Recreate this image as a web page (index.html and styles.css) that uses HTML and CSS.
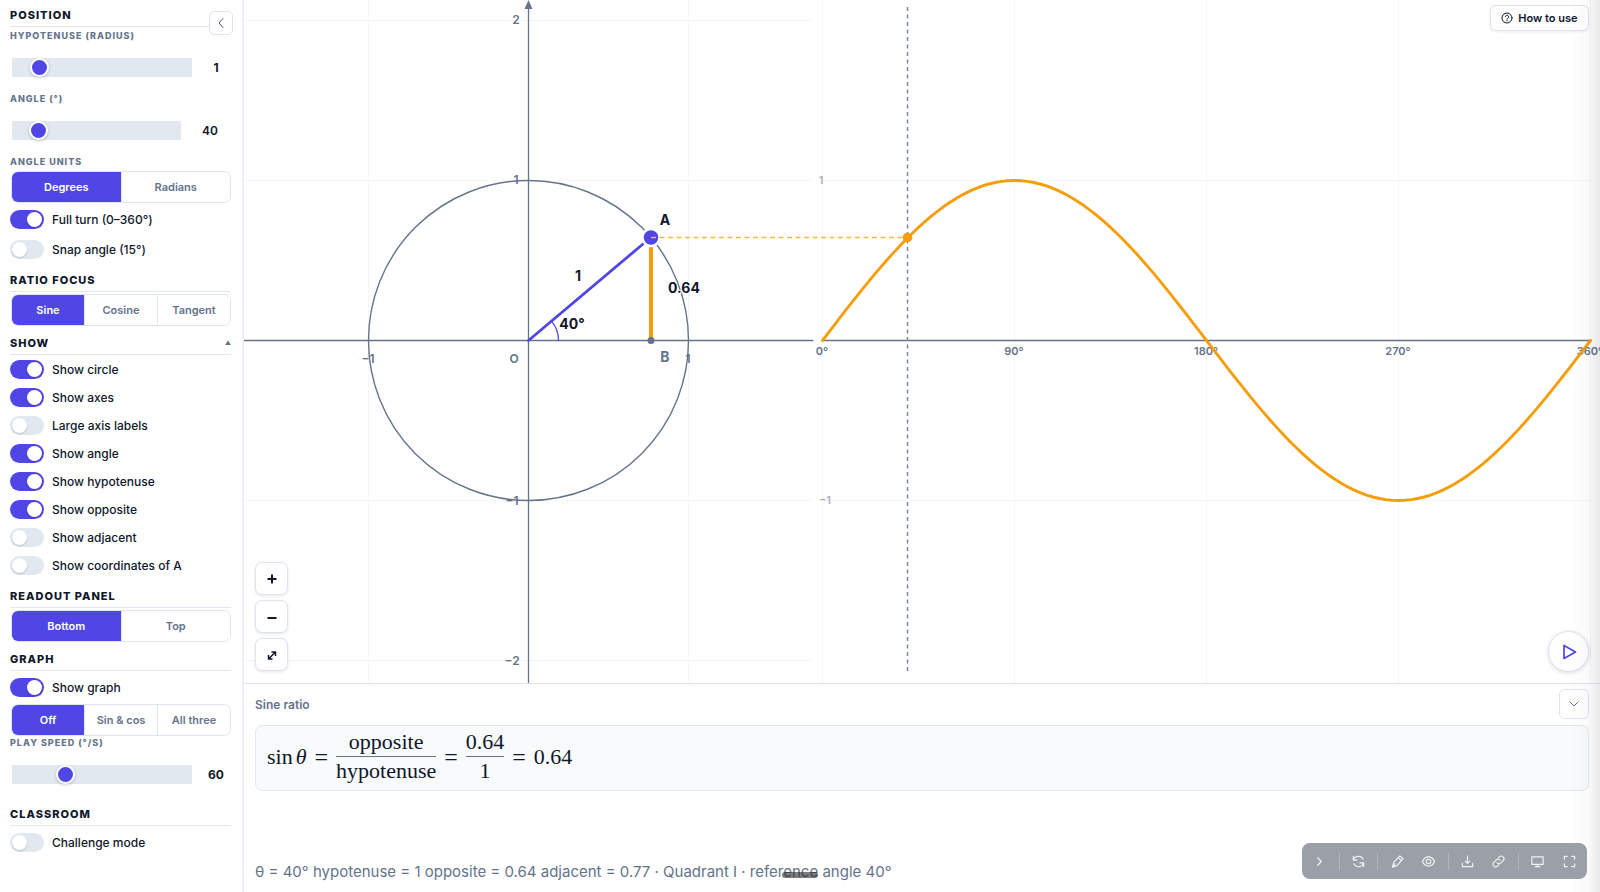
FILE: index.html
```html
<!DOCTYPE html>
<html lang="en">
<head>
<meta charset="utf-8">
<title>Unit circle and trigonometric ratios</title>
<link rel="stylesheet" href="styles.css">
</head>
<body>
<div class="app">
  <aside class="sidebar">
    <button class="collapse" aria-label="Collapse panel"><svg width="14" height="14" viewBox="0 0 14 14"><path d="M9 2.500 5 7 9 11.500"/></svg></button>
    <h2 class="heading">Position</h2>
    <label class="field" for="hyp">Hypotenuse (radius)</label>
    <div class="slider-row"><input id="hyp" class="slider" type="range" min="0.5" max="5" step="0.1" value="1"><output class="value" for="hyp">1</output></div>
    <label class="field" for="angle">Angle (°)</label>
    <div class="slider-row"><input id="angle" class="slider" type="range" min="0" max="360" value="40"><input class="number" type="text" value="40" aria-label="Angle value"></div>
    <div class="field">Angle units</div>
    <div class="segmented"><button class="active">Degrees</button><button>Radians</button></div>
    <label class="toggle roomy"><input type="checkbox" checked>Full turn (0–360°)</label>
    <label class="toggle roomy"><input type="checkbox">Snap angle (15°)</label>

    <h2 class="heading">Ratio focus</h2>
    <div class="segmented"><button class="active">Sine</button><button>Cosine</button><button>Tangent</button></div>

    <h2 class="heading">Show<span class="caret">▲</span></h2>
    <label class="toggle"><input type="checkbox" checked>Show circle</label>
    <label class="toggle"><input type="checkbox" checked>Show axes</label>
    <label class="toggle"><input type="checkbox">Large axis labels</label>
    <label class="toggle"><input type="checkbox" checked>Show angle</label>
    <label class="toggle"><input type="checkbox" checked>Show hypotenuse</label>
    <label class="toggle"><input type="checkbox" checked>Show opposite</label>
    <label class="toggle"><input type="checkbox">Show adjacent</label>
    <label class="toggle"><input type="checkbox">Show coordinates of A</label>

    <h2 class="heading">Readout panel</h2>
    <div class="segmented"><button class="active">Bottom</button><button>Top</button></div>

    <h2 class="heading">Graph</h2>
    <label class="toggle roomy"><input type="checkbox" checked>Show graph</label>
    <div class="segmented"><button class="active">Off</button><button>Sin &amp; cos</button><button>All three</button></div>
    <label class="field" for="speed">Play speed (°/s)</label>
    <div class="slider-row"><input id="speed" class="slider" type="range" min="15" max="180" value="60"><output class="value" for="speed">60</output></div>

    <h2 class="heading">Classroom</h2>
    <label class="toggle roomy"><input type="checkbox">Challenge mode</label>
  </aside>

  <main class="main">
    <section class="stage">
      <svg class="canvas" viewBox="0 0 1356 683" preserveAspectRatio="xMidYMid meet">
        <g class="grid">
          <path d="M0 20.500H569M0 180.500H569M0 500.500H569M0 660.500H569M124.500 0V683M444.500 0V683"/>
          <path d="M578.500 0V683M770.500 0V683M962.500 0V683M1154.500 0V683M1346.500 0V683M578 180.500H1346M578 500.500H1346"/>
        </g>
        <path class="axis" d="M0 340.500H569M578 340.500H1346M284.500 6V683"/>
        <path class="arrow" d="M284.500 0 288.500 9H280.500Z"/>
        <g class="ticks">
          <text x="272" y="24" text-anchor="middle">2</text>
          <text x="272" y="184" text-anchor="middle">1</text>
          <text x="268" y="505" text-anchor="middle">−1</text>
          <text x="268" y="665" text-anchor="middle">−2</text>
          <text x="124" y="363" text-anchor="middle">−1</text>
          <text x="444" y="363" text-anchor="middle">1</text>
          <text x="270" y="363" text-anchor="middle">O</text>
        </g>
        <circle class="circle" cx="284.500" cy="340.500" r="160"/>
        <path class="arc" d="M314.500 340.500A30 30 0 0 0 307.500 321.200"/>
        <path class="opposite" d="M407 247V340"/>
        <path class="hypotenuse" d="M284.500 340.500 399 244"/>
        <circle class="point-a" cx="407" cy="237.500" r="8.500"/>
        <circle class="point-b" cx="407" cy="340.500" r="3.500"/>
        <g class="labels">
          <text x="421" y="225" text-anchor="middle">A</text>
          <text x="334" y="281" text-anchor="middle">1</text>
          <text x="440" y="293" text-anchor="middle">0.64</text>
          <text x="328" y="329" text-anchor="middle">40°</text>
          <text class="muted" x="421" y="362" text-anchor="middle">B</text>
        </g>
        <g class="wave-ticks">
          <text class="faint" x="577" y="184" text-anchor="middle">1</text>
          <text class="faint" x="581" y="504" text-anchor="middle">−1</text>
          <text x="578" y="355" text-anchor="middle">0°</text>
          <text x="770" y="355" text-anchor="middle">90°</text>
          <text x="962" y="355" text-anchor="middle">180°</text>
          <text x="1154" y="355" text-anchor="middle">270°</text>
          <text x="1346" y="355" text-anchor="middle">360°</text>
        </g>
        <path class="guide" d="M663.500 7V671"/>
        <path class="projection" d="M407 237.500H664"/>
        <path id="wave" class="wave"/>
        <circle class="wave-point" cx="663.500" cy="237.500" r="4.800"/>
      </svg>
      <div class="zoom">
        <button aria-label="Zoom in"><svg width="16" height="16" viewBox="0 0 16 16"><path d="M8 3.500v9M3.500 8h9"/></svg></button>
        <button aria-label="Zoom out"><svg width="16" height="16" viewBox="0 0 16 16"><path d="M3.500 9h9"/></svg></button>
        <button aria-label="Fit view"><svg class="fit" width="16" height="16" viewBox="0 0 16 16"><path d="M5 11.500l6-6M7.500 5h4v4M4.500 8v4h4"/></svg></button>
      </div>
      <button class="help"><svg width="12" height="12" viewBox="0 0 12 12"><circle cx="6" cy="6" r="5"/><path d="M4.400 4.800a1.600 1.600 0 1 1 2.400 1.400c-.6.300-.8.500-.8 1M6 8.500v.5"/></svg>How to use</button>
      <button class="play" aria-label="Play"><svg width="16" height="18" viewBox="0 0 16 18"><path d="M3 2.500v13L14.500 9Z"/></svg></button>
    </section>

    <section class="readout">
      <header class="readout-head"><h3>Sine ratio</h3><button class="fold" aria-label="Hide readout"><svg width="12" height="12" viewBox="0 0 12 12"><path d="M2 4l4 4 4-4"/></svg></button></header>
      <div class="formula">
        <span class="fn">sin</span><i>θ</i><span class="eq">=</span>
        <span class="frac"><span class="num">opposite</span><span>hypotenuse</span></span><span class="eq">=</span>
        <span class="frac"><span class="num">0.64</span><span>1</span></span><span class="eq">=</span><span>0.64</span>
      </div>
      <p class="summary">θ = 40° hypotenuse = 1 opposite = 0.64 adjacent = 0.77 · Quadrant I · reference angle 40°</p>
    </section>
  </main>
</div>
<div class="edge"></div>
<div class="handle"></div>
<nav class="toolbar" aria-label="Page tools">
  <button aria-label="Collapse toolbar"><svg viewBox="0 0 16 16"><path d="M6 4l4 4-4 4"/></svg></button><hr>
  <button aria-label="Reload"><svg viewBox="0 0 16 16"><path d="M2.500 6.500A5.700 5.700 0 0 1 13 5.500M13.500 9.500A5.700 5.700 0 0 1 3 10.500M2.500 2.500v4h4M13.500 13.500v-4h-4"/></svg></button><hr>
  <button aria-label="Draw"><svg viewBox="0 0 16 16"><path d="M2.500 14l1.500-5L10.500 2l3.500 3-6.500 7.500L2.500 14l3-3.500M9 4l3.500 3"/></svg></button>
  <button aria-label="Focus"><svg viewBox="0 0 16 16"><path d="M1.500 8c3-6.500 10-6.500 13 0-3 6.500-10 6.500-13 0Z"/><circle cx="8" cy="8" r="2.400"/></svg></button><hr>
  <button aria-label="Download"><svg viewBox="0 0 16 16"><path d="M8 2v8M5.500 7.500L8 10l2.500-2.500M2.500 10v3.500h11V10"/></svg></button>
  <button aria-label="Copy link"><svg viewBox="0 0 16 16"><path d="M6.500 9.500a2.800 2.800 0 0 0 4 0l2.500-2.500a2.800 2.800 0 0 0-4-4L7.500 4.500M9.500 6.500a2.800 2.800 0 0 0-4 0L3 9a2.800 2.800 0 0 0 4 4l1.500-1.500"/></svg></button><hr>
  <button aria-label="Present"><svg viewBox="0 0 16 16"><path d="M2 3h12v8H2ZM8 11v2.500M5.500 13.500h5"/></svg></button>
  <button aria-label="Full screen"><svg viewBox="0 0 16 16"><path d="M2.500 5.500v-3h3M10.500 2.500h3v3M13.500 10.500v3h-3M5.500 13.500h-3v-3"/></svg></button>
</nav>
<script src="script.js"></script>
</body>
</html>
```
FILE: styles.css
```css
* { box-sizing: border-box; }
body { margin: 0; background: #fff; color: #0f172a; font-family: Inter, sans-serif; }
button { font: inherit; color: inherit; padding: 0; background: #fff; cursor: pointer; }
svg { fill: none; stroke: currentColor; stroke-linecap: round; stroke-linejoin: round; }
.app { display: grid; grid-template-columns: 244px minmax(0, 1fr); height: 100vh; }

.sidebar { position: relative; padding: 0 11px 0 10px; border-right: 2px solid #eceff6; overflow: hidden; }
.collapse { position: absolute; top: 11px; right: 9px; width: 24px; height: 24px; display: grid; place-items: center; border: 1px solid #dde4ee; border-radius: 5px; color: #475569; }
.heading { display: flex; justify-content: space-between; align-items: center; margin: 9px 0 0; padding-bottom: 3px; border-bottom: 1px solid #e2e8f0; font-size: 11px; line-height: 16px; font-weight: 800; letter-spacing: 1px; text-transform: uppercase; }
.collapse + .heading { margin: 7px 0 2px; }
.roomy + .heading { margin-top: 8px; }
.slider-row + .heading { margin-top: 7px; }
.caret { font-size: 6px; letter-spacing: 0; color: #64748b; }
.field { display: block; font-size: 9px; line-height: 14px; font-weight: 800; letter-spacing: 1px; text-transform: uppercase; color: #64748b; }
.slider-row { display: flex; align-items: center; height: 49px; padding-left: 2px; }
.slider { appearance: none; flex: 1; min-width: 0; height: 19px; margin: 0; background: #e2e8f0; }
.slider::-webkit-slider-thumb { appearance: none; width: 19px; height: 19px; border: 2px solid #fff; border-radius: 50%; background: #4f46e5; box-shadow: 0 1px 3px rgba(15, 23, 42, .25); }
.value { width: 39px; padding-left: 9px; text-align: center; font-size: 12px; font-weight: 700; }
.number { width: 50px; padding: 0 0 0 8px; border: 0; text-align: center; font: 600 12px Inter, sans-serif; color: #0f172a; background: none; }
.segmented { display: flex; height: 32px; margin: 2px 0 0 1px; border: 1px solid #dde4ee; border-radius: 7px; overflow: hidden; }
.segmented button { flex: 1 1 0; border: 0; font-size: 11px; font-weight: 600; color: #64748b; }
.segmented button + button { border-left: 1px solid #e2e8f0; }
.segmented .active { background: #4f46e5; color: #fff; }
.toggle { display: flex; align-items: center; gap: 8px; height: 28px; font-size: 12px; font-weight: 500; }
.roomy { height: 30px; }
.segmented + .roomy, .heading + .roomy { margin-top: 1px; }
.toggle input { appearance: none; width: 34px; height: 19px; margin: 0; padding: 2px; border-radius: 10px; background: #e2e8f0; }
.toggle input::before { content: ""; display: block; width: 15px; height: 15px; border-radius: 50%; background: #fff; box-shadow: 0 1px 2px rgba(15, 23, 42, .2); }
.toggle input:checked { background: #4f46e5; }
.toggle input:checked::before { margin-left: 15px; }

.main { display: flex; flex-direction: column; min-width: 0; }
.stage { position: relative; flex: 1; min-height: 0; border-bottom: 1px solid #dde4ee; }
.canvas { display: block; width: 100%; height: 100%; }
.canvas text { stroke: none; fill: #64748b; }
.grid { stroke: #f4f6f9; stroke-width: 1; }
.axis { stroke: #64748b; stroke-width: 1.3; }
.arrow { fill: #64748b; stroke: none; }
.ticks { font-size: 12px; font-weight: 600; }
.circle { stroke: #64748b; stroke-width: 1.4; }
.arc { stroke: #4f46e5; stroke-width: 1.3; }
.opposite { stroke: #f59e0b; stroke-width: 4; stroke-linecap: butt; }
.hypotenuse { stroke: #4f46e5; stroke-width: 2.800; }
.point-a { fill: #4f46e5; stroke: #fff; stroke-width: 2.500; }
.point-b { fill: #64748b; stroke: none; }
.labels { font-size: 14px; font-weight: 700; }
.canvas .labels text { fill: #0f172a; stroke: #fff; stroke-width: 2; paint-order: stroke; }
.canvas .labels .muted { fill: #64748b; }
.wave-ticks { font-size: 11px; font-weight: 600; }
.canvas .faint { fill: #a8b2c1; }
.guide { stroke: #7b8798; stroke-width: 1.500; stroke-dasharray: 4 3.500; stroke-linecap: butt; }
.projection { stroke: #f5b74f; stroke-width: 1.300; stroke-dasharray: 5 3.500; stroke-linecap: butt; }
.wave { stroke: #f59e0b; stroke-width: 2.900; }
.wave-point { fill: #f59e0b; stroke: none; }
.zoom { position: absolute; left: 11px; bottom: 12px; display: grid; gap: 5px; }
.zoom button { width: 33px; height: 33px; display: grid; place-items: center; border: 1px solid #dde4ee; border-radius: 7px; box-shadow: 0 1px 3px rgba(15, 23, 42, .1); }
.zoom svg { stroke-width: 2; stroke-linecap: butt; }
.zoom .fit { stroke-width: 1.500; }
.help { position: absolute; top: 5px; right: 11px; width: 99px; height: 26px; display: flex; align-items: center; justify-content: center; gap: 5px; border: 1px solid #dde4ee; border-radius: 6px; font-size: 11px; font-weight: 600; box-shadow: 0 1px 3px rgba(15, 23, 42, .08); }
.play { position: absolute; right: 11px; bottom: 11px; width: 41px; height: 41px; display: grid; place-items: center; border: 1px solid #dde4ee; border-radius: 50%; color: #4f46e5; box-shadow: 0 1px 4px rgba(15, 23, 42, .15); }
.play svg { stroke-width: 1.700; }

.readout { display: flex; flex-direction: column; height: 208px; padding: 5px 11px 8px 11px; }
.readout-head { display: flex; align-items: center; justify-content: space-between; margin-bottom: 6px; }
.readout-head h3 { margin: 0; font-size: 12px; font-weight: 600; color: #64748b; }
.fold { width: 30px; height: 30px; display: grid; place-items: center; border: 1px solid #dde4ee; border-radius: 5px; color: #64748b; }
.formula { display: flex; align-items: center; height: 66px; padding: 0 11px 3px; border: 1px solid #e2e8f0; border-radius: 7px; background: #f8fafc; font-family: "Liberation Serif", serif; font-size: 22px; line-height: 28px; }
.fn { margin-right: 3px; }
.eq { margin: 0 8px; font-size: 24px; }
.frac { display: flex; flex-direction: column; align-items: stretch; text-align: center; line-height: 28px; }
.num { border-bottom: 1px solid #64748b; }
.summary { margin: auto 0 0; font-size: 15px; line-height: 24px; color: #64748b; }

.edge { position: fixed; top: 0; right: 0; bottom: 0; width: 30px; background: linear-gradient(to right, rgba(0, 0, 0, 0), rgba(0, 0, 0, .02) 60%, rgba(0, 0, 0, .09)); pointer-events: none; }
.handle { position: fixed; left: 50%; bottom: 14px; width: 36px; height: 6px; margin-left: -18px; border-radius: 3px; background: rgba(40, 40, 40, .6); }
.toolbar { position: fixed; right: 13px; bottom: 13px; width: 285px; height: 36px; padding: 0 2px; display: flex; align-items: center; border-radius: 8px; background: #9b9fa7; color: #f3f4f6; }
.toolbar button { flex: 1 1 0; height: 36px; display: grid; place-items: center; border: 0; background: none; }
.toolbar svg { width: 15px; height: 15px; stroke-width: 1.200; }
.toolbar hr { width: 1px; height: 17px; margin: 0 3px; border: 0; background: #b1b5bc; }
```
FILE: script.js
```javascript
// One full period of the sine, plotted from 0° to 360°.
const originX = 578.5, originY = 340.5, span = 768, unit = 160;
let d = "";
for (let deg = 0; deg <= 360; deg += 3) {
  const x = originX + span * deg / 360;
  const y = originY - unit * Math.sin(deg * Math.PI / 180);
  d += (deg ? "L" : "M") + x.toFixed(2) + " " + y.toFixed(2);
}
document.getElementById("wave").setAttribute("d", d);
```
